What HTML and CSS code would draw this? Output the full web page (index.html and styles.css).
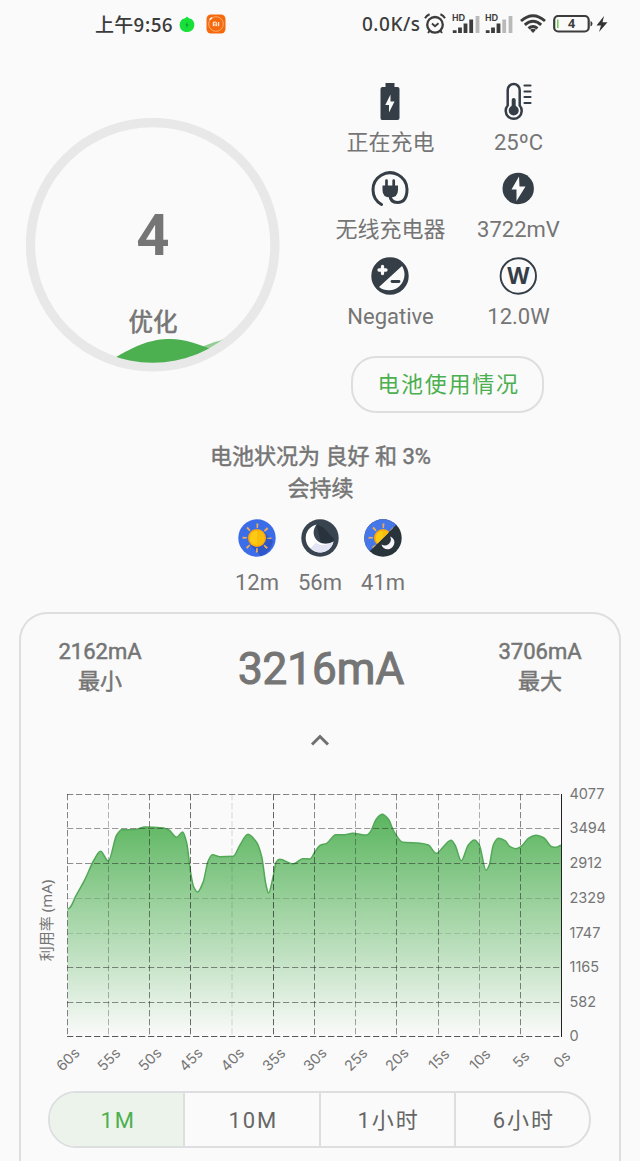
FILE: index.html
```html
<!DOCTYPE html>
<html lang="zh-CN">
<head>
    <meta charset="utf-8">
    <title>电池</title>
    <link rel="stylesheet" href="styles.css">
</head>
<body>
<div class="status">
    <span class="time">上午9:56</span>
    <svg class="leaf" width="16" height="17" viewBox="0 0 16 17">
        <path d="M8 .5 C9.500 2 10.500 2.700 12.500 3 C15 5 16 8 15 11 C14 14.500 11.500 16 8 16 C4.500 16 1.800 14.500 1 11 C0 8 1 5 3.500 3 C5.500 2.700 6.500 2 8 .5Z" fill="#17e03a"/>
        <path d="M8.500 6 L6.300 9.200 H7.700 L7.200 11.800 L9.700 8.500 H8.200Z" fill="#0a9a30"/>
    </svg>
    <svg class="mi" width="20" height="20" viewBox="0 0 20 20">
        <rect x=".5" y=".5" width="19" height="19" rx="4.500" fill="#f56a0c"/>
        <circle cx="10" cy="10" r="7.300" fill="none" stroke="#ffb27a" stroke-width=".9"/>
        <path d="M3.500 5.800 L6 3.600" stroke="#fff" stroke-width="1.500"/>
        <path d="M7.300 12.200 V8.200 H9.700 Q10.700 8.200 10.700 9.200 V12.200 M9 9.600 V12.200 M12.700 8 V12.200" fill="none" stroke="#fff" stroke-width="1"/>
    </svg>
    <span class="speed">0.0K/s</span>
    <svg class="alarm" width="22" height="22" viewBox="0 0 22 22" fill="none" stroke="#3c3c3c">
        <circle cx="11" cy="11.800" r="7.800" stroke-width="2.300"/>
        <path d="M8 10.500 L11 13.200 L14.500 10.300" stroke-width="1.900"/>
        <path d="M1 5.200 Q2.500 2.500 5.600 1.300 M21 5.200 Q19.500 2.500 16.400 1.300" stroke-width="2"/>
        <path d="M5.500 18 L4 20 M16.500 18 L18 20" stroke-width="2"/>
    </svg>
    <svg class="signal" width="28" height="24" viewBox="0 -2 28 24">
        <text x="0" y="7" class="hd">HD</text>
        <path d="M2.700 19 V16.300 M8 19 V13.500 M13.500 19 V9.500 M19.200 19 V5.500" stroke="#3c3c3c" stroke-width="3.800"/>
        <path d="M25.500 19 V2" stroke="#b9b9b9" stroke-width="3.800"/>
    </svg>
    <svg class="signal second" width="28" height="24" viewBox="0 -2 28 24">
        <text x="0" y="7" class="hd">HD</text>
        <path d="M2.700 19 V16.300 M8 19 V13.500 M13.500 19 V9.500" stroke="#3c3c3c" stroke-width="3.800"/>
        <path d="M19.200 19 V5.500 M25.500 19 V2" stroke="#b9b9b9" stroke-width="3.800"/>
    </svg>
    <svg class="wifi" width="26" height="20" viewBox="0 0 26 20" fill="none" stroke="#3c3c3c" stroke-width="2.900">
        <path d="M1 7 Q13 -3.500 25 7"/>
        <path d="M4.800 10.800 Q13 3.800 21.200 10.800"/>
        <path d="M8.500 14.300 Q13 10.500 17.500 14.300"/>
        <path d="M10 15.800 Q13 13.800 16 15.800 L13 19Z" fill="#3c3c3c" stroke="none"/>
    </svg>
    <svg class="battery" width="56" height="20" viewBox="0 0 56 20">
        <rect x="1.200" y="2" width="34.500" height="15.500" rx="4" fill="none" stroke="#3c3c3c" stroke-width="2.200"/>
        <path d="M37.500 7 Q39.500 7.500 39.500 9.700 T37.500 12.500Z" fill="#3c3c3c"/>
        <path d="M4.800 5.500 V14" stroke="#6fcf4a" stroke-width="1.500"/>
        <text x="18.500" y="14.200" class="level">4</text>
        <path d="M51 2 L43.500 11.500 H48 L46 18 L54.500 8.200 H49.500Z" fill="#333"/>
    </svg>
</div>

<div class="overview">
    <div class="gauge">
        <svg width="254" height="254" viewBox="0 0 254 254">
            <defs><clipPath id="inner"><circle cx="126.700" cy="126.700" r="118"/></clipPath></defs>
            <circle cx="126.700" cy="126.700" r="122.200" fill="none" stroke="#e8e8e8" stroke-width="9.300"/>
            <g clip-path="url(#inner)">
                <path d="M170 232 Q188 222 208 220 V254 H150Z" fill="#94ce96"/>
                <path d="M85 242 C112 226 126 221 144 221 C160 221 172 226 190 233 V254 H85Z" fill="#4caf50"/>
            </g>
        </svg>
        <div class="percent">4</div>
        <div class="mode">优化</div>
    </div>
    <div class="facts">
        <ul>
            <li>
                <svg width="40" height="40" viewBox="0 0 40 40">
                    <path d="M15.500 1 H24.500 V5 H27.500 Q29.500 5 29.500 7 V36 Q29.500 38 27.500 38 H12 Q10.500 38 10.500 36 V7 Q10.500 5 12.500 5 H15.500Z" fill="#353e47"/>
                    <path d="M20.500 12.500 L15.300 23 H19 V30.500 L24.500 19.500 H20.500Z" fill="#fafafa"/>
                </svg>
                <span>正在充电</span>
            </li>
            <li>
                <svg width="40" height="40" viewBox="0 1 40 40" fill="none" stroke="#353e47">
                    <path d="M9.700 24.500 V9 A6 6 0 0 1 21.700 9 V24.500 A8 8 0 1 1 9.700 24.500Z" stroke-width="2.500"/>
                    <path d="M15.700 19 V28" stroke-width="4" stroke-linecap="round"/>
                    <circle cx="15.700" cy="29.500" r="5" fill="#353e47" stroke="none"/>
                    <path d="M26.500 4.500 H32.500 M26.500 10.500 H32.500 M26.500 16 H32.500 M26.500 22 H32.500" stroke-width="2.200" stroke-linecap="round"/>
                </svg>
                <span>25ºC</span>
            </li>
            <li>
                <svg width="40" height="40" viewBox="0 .5 40 40" fill="none" stroke="#353e47">
                    <path d="M11.500 36 A17 17 0 1 1 37 20.500 C37 30 33.500 34 27.500 34 C22.500 34 20 31 20 26" stroke-width="3" stroke-linecap="round"/>
                    <path d="M16.500 18 V12 M23.700 18 V12" stroke-width="2.700" stroke-linecap="round"/>
                    <path d="M12.500 17 H28 V21.500 Q28 29 20.200 29 T12.500 21.500Z" fill="#353e47" stroke="none"/>
                </svg>
                <span>无线充电器</span>
            </li>
            <li>
                <svg width="40" height="40" viewBox="0 1 40 40">
                    <circle cx="20.200" cy="20.500" r="15.700" fill="#353e47"/>
                    <path d="M21 8.500 L13.500 21.500 H18.500 V33 L27.500 18.500 H21.500Z" fill="#fafafa"/>
                </svg>
                <span>3722mV</span>
            </li>
            <li>
                <svg width="40" height="40" viewBox="0 0 40 40">
                    <circle cx="20" cy="20" r="17.200" fill="#353e47" stroke="#353e47" stroke-width="3"/>
                    <path d="M9 31 L32 10 A15.800 15.800 0 0 1 9 31Z" fill="#fafafa"/>
                    <path d="M12.500 10.500 V17.500 M9 14 H16" stroke="#fafafa" stroke-width="3.300" stroke-linecap="round"/>
                    <path d="M22 25.500 H29" stroke="#353e47" stroke-width="2.800" stroke-linecap="round"/>
                </svg>
                <span>Negative</span>
            </li>
            <li>
                <svg width="40" height="40" viewBox="0 0 40 40">
                    <circle cx="20.300" cy="20" r="17.700" fill="none" stroke="#353e47" stroke-width="1.900"/>
                    <text x="20.300" y="27.700" class="watt">W</text>
                </svg>
                <span>12.0W</span>
            </li>
        </ul>
        <a class="usage">电池使用情况</a>
    </div>
</div>

<div class="health">电池状况为 良好 和 3%<br>会持续</div>

<ul class="remain">
    <li>
        <svg width="38" height="38" viewBox="0 0 38 38">
            <circle cx="19" cy="19" r="18.700" fill="#3b6de8"/>
            <path d="M26 13 L35 22 Q33 33 23 37.200 L12 26Z" fill="#2f57c8"/>
            <g id="sun">
                <circle cx="19" cy="19" r="12.300" fill="none" stroke="#e8ad5c" stroke-width="4.400" stroke-dasharray="1.800 7.860" stroke-dashoffset=".9"/>
                <circle cx="19" cy="19" r="9" fill="#ffa808"/>
                <circle cx="19" cy="19" r="7.300" fill="#ffca13"/>
                <path d="M19 11.700 A7.300 7.300 0 0 1 19 26.300Z" fill="#f9bd0e"/>
            </g>
        </svg>
        <span>12m</span>
    </li>
    <li>
        <svg width="38" height="38" viewBox="0 0 38 38">
            <circle cx="19" cy="19" r="18.700" fill="#384450"/>
            <path d="M15.500 5.500 L22 8 L33 20 L32 24 L20 24Z" fill="#28333d"/>
            <path d="M15.500 5.500 C3 9 2 23 9.500 29.500 C17 36.500 30 34 32.500 22.500 C19 30 7 17 15.500 5.500Z" fill="#fff"/>
            <path d="M15 23.500 C20 27.500 27 26.500 32.500 22.500 C30 34 17 36.500 9.500 29.500Z" fill="#e3e5f4"/>
        </svg>
        <span>56m</span>
    </li>
    <li>
        <svg width="38" height="38" viewBox="0 0 38 38">
            <defs><clipPath id="dusk"><path d="M0 0 H38 L32 6 L6 32 L0 38Z"/></clipPath></defs>
            <circle cx="19" cy="19" r="18.700" fill="#28333a"/>
            <g clip-path="url(#dusk)">
                <circle cx="19" cy="19" r="18.700" fill="#4677e8"/>
                <use href="#sun"/>
            </g>
            <path d="M26 17.500 C29 22 24 29 17.500 25.500 C18.500 30.500 25 32 28.500 28 C32 24 30.500 19 26 17.500Z" fill="#f5f5fb"/>
        </svg>
        <span>41m</span>
    </li>
</ul>

<div class="card">
    <div class="range">
        <div class="side">2162mA<br>最小</div>
        <div class="now">3216mA</div>
        <div class="side">3706mA<br>最大</div>
    </div>
    <svg class="fold" width="20" height="14" viewBox="0 0 20 14"><path d="M2 11.500 L10 3.500 L18 11.500" fill="none" stroke="#707070" stroke-width="3"/></svg>
    <svg id="chart" width="598" height="320" viewBox="21 770 598 320">
        <defs>
            <linearGradient id="fade" gradientUnits="userSpaceOnUse" x1="0" y1="794" x2="0" y2="1036">
                <stop offset="0" stop-color="#4caf50"/>
                <stop offset="1" stop-color="#4caf50" stop-opacity="0"/>
            </linearGradient>
        </defs>
        <path id="area" fill="url(#fade)"/>
        <path id="line" fill="none" stroke="#52a857" stroke-width="1.500"/>
        <g id="grid"></g>
        <path d="M561.500 794 V1037" stroke="#222" stroke-width="1"/>
        <g id="labels"></g>
        <text class="title" transform="translate(51.500 920.500) rotate(-90)">利用率 (mA)</text>
    </svg>
    <div class="tabs">
        <a class="active">1M</a>
        <a>10M</a>
        <a>1小时</a>
        <a>6小时</a>
    </div>
</div>
<script src="chart.js"></script>
</body>
</html>
```
FILE: styles.css
```css
*{margin:0;padding:0;box-sizing:border-box;}
body{
    width:640px;
    height:1161px;
    overflow:hidden;
    background:#fafafa;
    color:#757575;
    font:22px/30px Roboto,"Noto Sans CJK SC",sans-serif;
}
li{list-style:none;}
svg{display:block;flex:none;}
.status{
    display:flex;
    align-items:center;
    height:48px;
    padding-left:95px;
    color:#3c3c3c;
    white-space:nowrap;
}
.time{width:84px;font:500 19px/46px "Noto Sans CJK SC",sans-serif;letter-spacing:.3px;}
.leaf{margin-right:11px;}
.speed{
    margin-left:136px;
    width:62px;
    font:500 19px/48px "Noto Sans",sans-serif;
    letter-spacing:.5px;
}
.alarm{margin-right:6px;}
.signal{margin-right:5px;}
.second{margin-right:7px;}
.wifi{margin-right:7px;}
.hd{font:900 8.5px/10px Lato,sans-serif;fill:#3c3c3c;}
.level{font:bold 12.5px "Noto Sans",sans-serif;fill:#3c3c3c;text-anchor:middle;}

.overview{
    display:flex;
    height:378px;
    padding-left:26px;
}
.gauge{
    position:relative;
    width:254px;
    height:254px;
    margin-top:70px;
}
.percent,.mode{
    position:absolute;
    left:0;
    width:100%;
    text-align:center;
}
.percent{top:83px;font-weight:bold;font-size:58px;line-height:68px;}
.mode{top:189px;font-size:24.5px;line-height:32px;-webkit-text-stroke:.6px #757575;}
.facts{
    width:256px;
    margin:34px 0 0 46px;
}
.facts ul{
    display:grid;
    grid-template-columns:128px 128px;
    grid-auto-rows:87px;
}
.facts li{
    display:flex;
    flex-direction:column;
    align-items:center;
    white-space:nowrap;
}
.facts li span{padding-left:1px;line-height:42px;}
.watt{font:bold 23px "Noto Sans",sans-serif;fill:#353e47;text-anchor:middle;}
.usage{
    display:block;
    width:193px;
    height:57px;
    margin:13px 0 0 25px;
    border:2px solid #dddee0;
    border-radius:25px;
    color:#4caf50;
    letter-spacing:1.7px;
    line-height:54px;
    text-align:center;
    text-indent:2px;
}
.health{
    margin-top:15px;
    padding-left:1px;
    text-align:center;
    line-height:32px;
    -webkit-text-stroke:.5px #757575;
}
.remain{
    display:flex;
    justify-content:center;
    margin-top:14px;
}
.remain li{
    width:63px;
    display:flex;
    flex-direction:column;
    align-items:center;
}
.remain span{margin-top:11px;}

.card{
    width:602px;
    height:549px;
    margin:14px 0 0 19px;
    border:2px solid #dddee0;
    border-bottom:none;
    border-radius:28px 28px 0 0;
}
.range{
    display:flex;
    justify-content:space-between;
    height:108px;
    padding:23px 29px 0;
}
.side{width:100px;text-align:center;-webkit-text-stroke:.5px #757575;}
.now{padding-left:2px;font-size:44px;line-height:64px;-webkit-text-stroke:1.1px #757575;}
.fold{margin:11px auto 23px;}
#chart{font:14.500px Inter,sans-serif;fill:#757575;}
#chart .tick{text-anchor:middle;font-size:14.500px;}
#chart .title{text-anchor:middle;font:15px "Noto Sans","Noto Sans CJK SC",sans-serif;}
.tabs{
    display:flex;
    width:543px;
    height:57px;
    margin:1px auto 0 27px;
    border:2px solid #dddee0;
    border-radius:28px;
    overflow:hidden;
    color:#666;
}
.tabs a{
    flex:1;
    line-height:55px;
    text-align:center;
    text-indent:3px;
    letter-spacing:1.900px;
}
.tabs a+a{border-left:2px solid #dddee0;}
.tabs .active{background:#ebf3eb;color:#4caf50;}
```
FILE: chart.js
```js
var NS='http://www.w3.org/2000/svg';
var xs=[67.5,108.5,149.5,190.5,232,273.5,314.5,355.5,396.5,438.5,479.5,520.5,561.5];
var ys=[794.5,828.5,863.5,898.5,933.5,967.5,1002.5,1036.5];
var yText=[4077,3494,2912,2329,1747,1165,582,0];
// lighter and darker grid lines
var xAlpha=[.55,.33,.55,.65,.15,.7,.55,.4,.5,.45,.35,.55,0];
var yAlpha=[.55,.45,.5,.18,.15,.5,.5,.75];
var pts=[[67.5,909],[70,907.5],[76,895.7],[85,879.3],[94,860],[100.5,851.3],[108.3,861],[116.7,835],[121.7,829.7],[135,829.6],[145,827],[163.5,828],[169,830],[176.5,837.3],[182.7,832],[186.7,843],[190.7,873],[193.5,886.5],[197.5,892],[203.3,881.7],[208,861.5],[212.3,854.7],[220,856.7],[233.3,856.3],[240,845],[248,834.3],[256.7,842.5],[261.7,856.7],[266,885],[268.5,893],[273.3,876],[276,862.3],[279.5,859.3],[293.3,864],[302.7,858.7],[310,859],[315,851.7],[320,845.5],[326.7,843.3],[335.7,834.7],[345,834.7],[352.5,833.3],[366.7,835],[370,832.3],[376.7,818.5],[382.3,814.3],[388.3,819],[394,831.7],[402.7,842.3],[420,843.3],[428.3,845],[436.3,853.3],[444,846],[451,840.3],[455,845],[461.3,860.7],[468.3,845],[474.3,840],[479.3,845],[486,870.3],[489.3,865],[493.3,845],[498.3,838.3],[505,840.7],[510,846.7],[515.7,848.7],[521.7,846],[528.3,838.3],[536,835.3],[544,838],[551.7,846.7],[555.7,847.3],[561.3,845.3]];

function add(parent, tag, attrs, text)
{
    var el=document.createElementNS(NS, tag);
    for(var k in attrs) el.setAttribute(k, attrs[k]);
    if(text!==undefined) el.textContent=text;
    document.getElementById(parent).appendChild(el);
}

// slope at a point, flat at peaks and dips
function slope(i)
{
    if(i==0 || i==pts.length-1) return 0;
    var a=(pts[i][1]-pts[i-1][1])/(pts[i][0]-pts[i-1][0]);
    var b=(pts[i+1][1]-pts[i][1])/(pts[i+1][0]-pts[i][0]);
    return a*b<=0 ? 0 : 2*a*b/(a+b);
}

var d='M'+pts[0];
for(var i=1;i<pts.length;i++)
{
    var p=pts[i-1], q=pts[i], h=(q[0]-p[0])/3;
    d+=' C'+[p[0]+h, p[1]+h*slope(i-1), q[0]-h, q[1]-h*slope(i), q[0], q[1]];
}
document.getElementById('line').setAttribute('d', d);
document.getElementById('area').setAttribute('d', d+' V1036.500 H67.500 Z');

xs.forEach(function (x, i)
{
    add('grid', 'path', {d:'M'+x+' 794 V1036', stroke:'#222', 'stroke-dasharray':'6.3 2.7', 'stroke-opacity':xAlpha[i]});
    add('labels', 'text', {'class':'tick', transform:'translate('+(x+4)+' 1063) rotate(-45)'}, (60-i*5)+'s');
});
ys.forEach(function (y, i)
{
    add('grid', 'path', {d:'M67 '+y+' H561', stroke:'#222', 'stroke-dasharray':'6.3 2.7', 'stroke-opacity':yAlpha[i]});
    add('labels', 'text', {x:569.5, y:y+4.500}, yText[i]);
});
```
